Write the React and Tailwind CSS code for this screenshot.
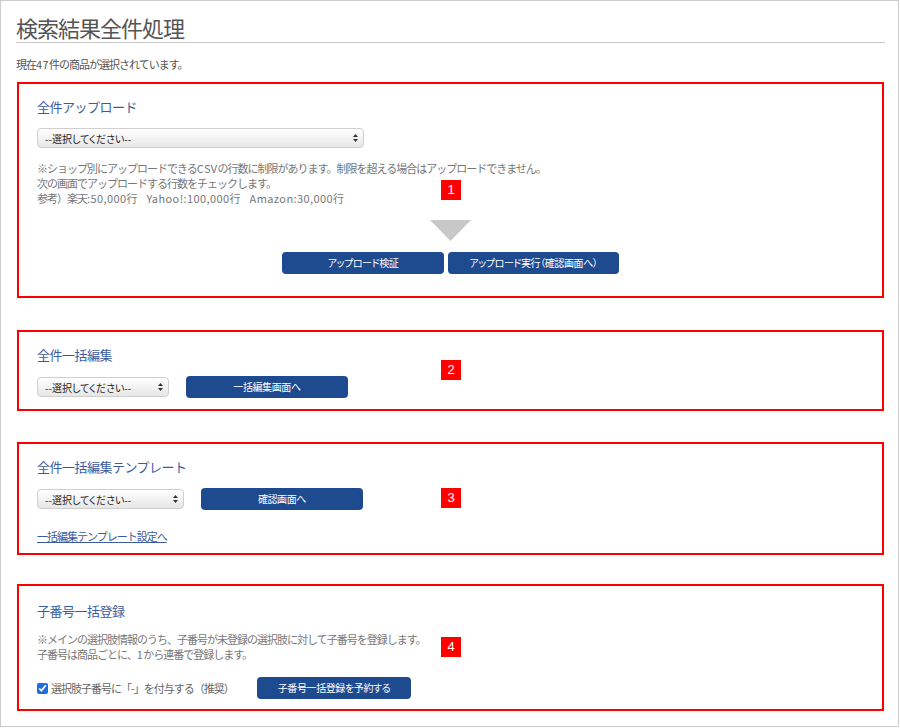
const Badge = ({ n, top }) => (
  <span className={`absolute left-[422px] ${top} w-[20px] h-[20px] bg-[#ff0000] text-white text-[13px] leading-[20px] text-center font-['Liberation_Sans',sans-serif]`}>
    {n}
  </span>
);

const Select = ({ width }) => (
  <div className={`relative ${width} h-[20px]`}>
    <select className="block appearance-none w-full h-full border border-[#cfcfcf] rounded-[4px] bg-gradient-to-b from-white to-[#e6e6e6] pl-[7px] text-[10px] text-[#222] [font-feature-settings:'palt'] outline-none">
      <option>--選択してください--</option>
    </select>
    <svg className="absolute right-[6px] top-[6px]" width="5" height="8" viewBox="0 0 5 8">
      <polygon points="2.5,0 5,3 0,3" fill="#333" />
      <polygon points="0,5 5,5 2.5,8" fill="#333" />
    </svg>
  </div>
);

const Button = ({ children, width }) => (
  <button className={`${width} h-[22px] bg-[#1e4a8f] rounded-[4px] text-white text-[10px] tracking-[-0.4px] [font-feature-settings:'palt'] leading-[22px]`}>
    {children}
  </button>
);

const Heading = ({ children }) => (
  <h2 className="text-[13px] leading-[20px] tracking-[-0.5px] text-[#3a5c9e]">{children}</h2>
);

// half-width runs need normal spacing next to the squeezed full-width text
const Lat = ({ children }) => <span className="tracking-[0.4px]">{children}</span>;

export default function App() {
  return (
    <div className="w-[899px] h-[727px] border border-[#cccccc] bg-white pl-[15px] pr-[13px] font-['Noto_Sans_CJK_JP',sans-serif] text-[#666]">
      <h1 className="pt-[13px] pb-[2px] text-[22px] leading-[26px] tracking-[-1px] text-[#555] border-b border-[#c8c8c8]">
        検索結果全件処理
      </h1>
      <p className="mt-[13px] text-[11px] leading-[16px] tracking-[-1px] text-[#555]">
        現在<Lat>47</Lat>件の商品が選択されています。
      </p>

      {/* 全件アップロード */}
      <section className="relative mt-[10px] ml-[1px] w-[867px] border-2 border-[#ff0000] pl-[18px] pt-[13px] pb-[22px]">
        <Heading>全件アップロード</Heading>
        <div className="mt-[11px]">
          <Select width="w-[327px]" />
        </div>
        <div className="mt-[13px] text-[11px] leading-[15px] tracking-[-1px] text-[#777]">
          <p>※ショップ別にアップロードできる<Lat>CSV</Lat>の行数に制限があります。制限を超える場合はアップロードできません。</p>
          <p>次の画面でアップロードする行数をチェックします。</p>
          <p>
            参考）楽天<Lat>:50,000</Lat>行　<Lat>Yahoo!:100,000</Lat>行　<Lat>Amazon:30,000</Lat>行
          </p>
        </div>
        <div className="mt-[14px] flex justify-center pr-[18px]">
          <svg width="41" height="21" viewBox="0 0 41 21">
            <polygon points="0,0 41,0 20.5,21" fill="#c8c8c8" />
          </svg>
        </div>
        <div className="mt-[11px] flex justify-center gap-[4px] pr-[18px]">
          <Button width="w-[162px]">アップロード検証</Button>
          <Button width="w-[171px]">アップロード実行（確認画面へ）</Button>
        </div>
        <Badge n="1" top="top-[96px]" />
      </section>

      {/* 全件一括編集 */}
      <section className="relative mt-[32px] ml-[1px] w-[867px] border-2 border-[#ff0000] pl-[18px] pt-[13px] pb-[11px]">
        <Heading>全件一括編集</Heading>
        <div className="mt-[11px] flex items-center gap-[17px]">
          <Select width="w-[132px]" />
          <Button width="w-[162px]">一括編集画面へ</Button>
        </div>
        <Badge n="2" top="top-[28px]" />
      </section>

      {/* 全件一括編集テンプレート */}
      <section className="relative mt-[31px] ml-[1px] w-[867px] border-2 border-[#ff0000] pl-[18px] pt-[13px] pb-[9px]">
        <Heading>全件一括編集テンプレート</Heading>
        <div className="mt-[11px] flex items-center gap-[17px]">
          <Select width="w-[147px]" />
          <Button width="w-[162px]">確認画面へ</Button>
        </div>
        <a href="#" className="block mt-[18px] w-fit text-[11px] leading-[16px] tracking-[-1px] text-[#3a5c9e] underline">
          一括編集テンプレート設定へ
        </a>
        <Badge n="3" top="top-[44px]" />
      </section>

      {/* 子番号一括登録 */}
      <section className="relative mt-[29px] ml-[1px] w-[867px] border-2 border-[#ff0000] pl-[18px] pt-[15px] pb-[10px]">
        <Heading>子番号一括登録</Heading>
        <div className="mt-[11px] text-[11px] leading-[15px] tracking-[-1px] text-[#777]">
          <p>※メインの選択肢情報のうち、子番号が未登録の選択肢に対して子番号を登録します。</p>
          <p>子番号は商品ごとに、<Lat>1</Lat>から連番で登録します。</p>
        </div>
        <div className="mt-[15px] flex items-center">
          <label className="flex items-center gap-[3px] text-[11px] tracking-[-1px] text-[#666] w-[220px]">
            <input type="checkbox" defaultChecked className="w-[11px] h-[11px] m-0 accent-[#1a6fe0]" />
            選択肢子番号に「-」を付与する（推奨）
          </label>
          <Button width="w-[154px]">子番号一括登録を予約する</Button>
        </div>
        <Badge n="4" top="top-[51px]" />
      </section>
    </div>
  );
}
